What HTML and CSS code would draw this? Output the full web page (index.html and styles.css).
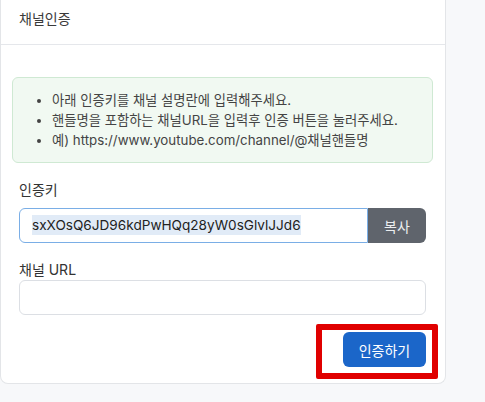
FILE: index.html
```html
<!DOCTYPE html>
<html lang="ko">
<head>
    <meta charset="UTF-8">
    <meta name="viewport" content="width=device-width, initial-scale=1.0">
    <title>채널인증</title>
    <link rel="stylesheet" href="styles.css">
</head>
<body>

    <div class="card">
        <div class="card-header">채널인증</div>
        <div class="card-body">
            <div class="alert">
                <ul>
                    <li>아래 인증키를 채널 설명란에 입력해주세요.</li>
                    <li>핸들명을 포함하는 채널URL을 입력후 인증 버튼을 눌러주세요.</li>
                    <li>예) https://www.youtube.com/channel/@채널핸들명</li>
                </ul>
            </div>

            <div class="form">
                <div class="field">
                    <div class="label">인증키</div>
                    <div class="input-group">
                        <div class="input focused"><span class="selected">sxXOsQ6JD96kdPwHQq28yW0sGlvlJJd6</span></div>
                        <button class="btn btn-gray">복사</button>
                    </div>
                </div>

                <div class="field field-url">
                    <div class="label">채널 URL</div>
                    <div class="input"></div>
                </div>

                <div class="actions">
                    <div class="highlight">
                        <button class="btn btn-blue">인증하기</button>
                    </div>
                </div>
            </div>
        </div>
    </div>

</body>
</html>
```

FILE: styles.css
```css
body {
    margin: 0;
    background-color: #f7f8fa;
    font-family: Inter, "Noto Sans CJK KR", sans-serif;
    color: #333;
}
.card {
    width: 446px;
    box-sizing: border-box;
    background-color: #fff;
    border: 1px solid #e3e5e8;
    border-top: none;
    border-radius: 0 0 8px 8px;
}
.card-header {
    height: 45px;
    box-sizing: border-box;
    padding: 9px 18px 0;
    font-size: 14px;
    line-height: 20px;
    color: #3a3a3a;
    border-bottom: 1px solid #e5e7eb;
}
.card-body {
    padding: 32px 12px 16px 11px;
}
.alert {
    background-color: #f1f9f2;
    border: 1px solid #cfe9d3;
    border-radius: 6px;
    padding: 12px 16px;
    font-size: 13.3px;
    line-height: 20px;
    color: #444;
}
.alert ul {
    margin: 0;
    padding-left: 23px;
}
.form {
    padding: 0 7px;
}
.field {
    margin-top: 17px;
}
.label {
    font-size: 14px;
    line-height: 20px;
    color: #333;
    margin-bottom: 8px;
}
.field-url .label {
    margin-bottom: 0;
}
.input-group {
    display: flex;
}
.input {
    flex: 1;
    height: 35px;
    box-sizing: border-box;
    border: 1px solid #dcdfe4;
    border-radius: 6px;
    padding: 0 12px;
    font-size: 13.6px;
    line-height: 33px;
    color: #222;
}
.input-group .input {
    border-radius: 6px 0 0 6px;
}
.input.focused {
    border-color: #7aaee6;
}
.selected {
    background-color: #e1ebf7;
    padding: 2px 0;
}
.btn {
    height: 35px;
    border: none;
    border-radius: 6px;
    font-family: inherit;
    font-size: 14px;
    color: #fff;
    padding: 0;
    white-space: nowrap;
}
.btn-gray {
    width: 58px;
    background-color: #5f646c;
    border-radius: 0 6px 6px 0;
    color: #eceef0;
}
.btn-blue {
    width: 83px;
    background-color: #1b66c9;
}
.actions {
    display: flex;
    justify-content: flex-end;
    margin-top: 17px;
}
.highlight {
    position: relative;
    display: flex;
}
.highlight::after {
    content: "";
    position: absolute;
    left: -27px;
    right: -12px;
    top: -8px;
    bottom: -12px;
    border: 6px solid #e00000;
    border-radius: 2px;
}
```
